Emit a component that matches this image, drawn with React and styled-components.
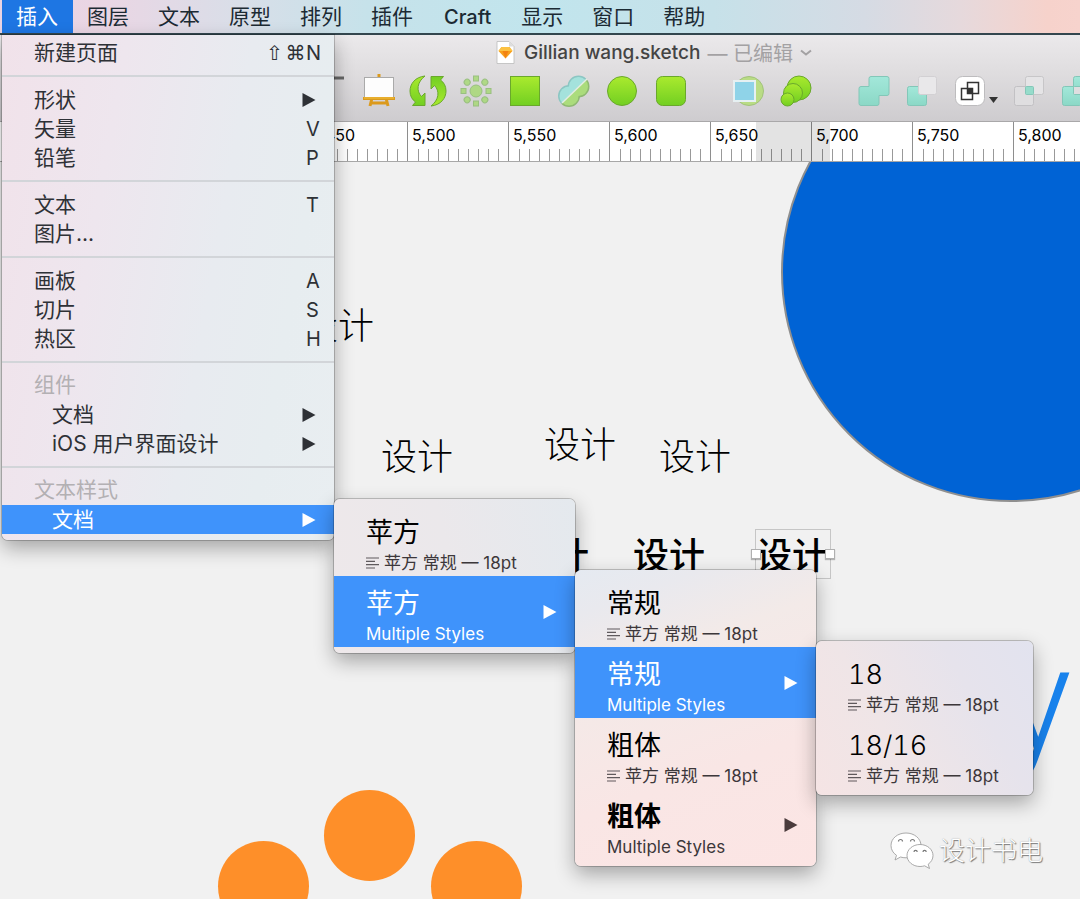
import React from "react";
import styled, { createGlobalStyle, css } from "styled-components";

const Global = createGlobalStyle`
  * { box-sizing: border-box; }
  html, body { margin: 0; padding: 0; }
  body, button { font-family: Inter, "Noto Sans CJK SC", sans-serif; }
  button { border: 0; padding: 0; background: none; color: inherit; text-align: left; }
  ul { list-style: none; margin: 0; padding: 0; }
`;

const Desktop = styled.div`
  position: relative;
  display: flex;
  flex-direction: column;
  min-height: 100vh;
  overflow: hidden;
  background: #f1f1f1;
`;

const MenuBar = styled.nav`
  display: flex;
  flex: none;
  height: 35px;
  padding-left: 2px;
  border-bottom: 2px solid #33464e;
  background: linear-gradient(90deg, #e9d3e2 0%, #ead6e4 10%, #d9dee8 22%, #c6e2ea 34%, #c1e5ed 50%, #c6e1e9 66%, #d5dbe4 80%, #e6d9dc 89%, #f6d2cb 97%, #f7d3cd 100%);
`;

const BarItem = styled.button`
  height: 33px;
  padding: 0 15px 0 14px;
  font-size: 21px;
  line-height: 32px;
  white-space: nowrap;
  color: ${(p) => (p.$open ? "#fff" : "#1c2a33")};
  background: ${(p) => (p.$open ? "#1e76e3" : "transparent")};
`;

const BarLatin = styled(BarItem)`
  padding: 0 16px;
  font-size: 20px;
  font-weight: 500;
`;

const WindowHead = styled.header`
  display: flex;
  flex-direction: column;
  flex: none;
  height: 87px;
  border-bottom: 1px solid #a9a8a9;
  background: linear-gradient(#ebe9eb, #e0dee0 40%, #cecccf);
`;

const TitleRow = styled.div`
  display: flex;
  align-items: center;
  height: 35px;
  padding-left: 496px;
  white-space: nowrap;
  color: #444;
`;

const DocTitle = styled.h1`
  margin: 0 7px 0 9px;
  font-size: 19px;
  font-weight: 500;
`;

const Edited = styled.button`
  display: flex;
  align-items: center;
  gap: 7px;
  font-size: 20px;
  color: #a3a1a3;
`;

const Toolbar = styled.div`
  display: flex;
  align-items: center;
  height: 42px;
  padding-left: 314px;
  overflow: hidden;
`;

const ToolGroup = styled.div`
  display: flex;
  flex: none;
  justify-content: space-between;
  width: ${(p) => p.$width}px;
  margin-left: ${(p) => p.$before}px;
`;

const ToolButton = styled.button`
  display: flex;
  align-items: center;
  flex: none;
  height: 34px;
  svg { display: block; }
`;

const Ruler = styled.div`
  position: relative;
  display: flex;
  flex: none;
  height: 40px;
  padding-left: 306px;
  overflow: hidden;
  border-bottom: 1px solid #a8a8a8;
  background: #fff;
`;

const RulerSpan = styled.div`
  position: absolute;
  left: 756px;
  top: 0;
  width: 74px;
  height: 40px;
  background: rgba(0, 0, 0, 0.11);
`;

const RulerCell = styled.div`
  display: flex;
  flex: none;
  flex-direction: column;
  justify-content: space-between;
  width: 101px;
  height: 40px;
  border-left: 1px solid #8e8e8e;
`;

const RulerLabel = styled.span`
  padding: 2px 0 0 4px;
  font-size: 16px;
  line-height: 22px;
  color: #000;
`;

const Ticks = styled.div`
  display: grid;
  grid-template-columns: repeat(10, 10px);
  height: 13px;
  span + span { border-left: 1px solid #999; }
`;

const Canvas = styled.main`
  position: relative;
  flex: 1;
  overflow: hidden;
`;

const Circle = styled.div`
  position: absolute;
  left: ${(p) => p.$x}px;
  top: ${(p) => p.$y}px;
  width: ${(p) => p.$size}px;
  height: ${(p) => p.$size}px;
  border-radius: 50%;
  background: ${(p) => p.$fill};
  ${(p) => p.$outlined && css`border: 2px solid #8f8f8f;`}
`;

const Word = styled.span`
  position: absolute;
  left: ${(p) => p.$x}px;
  top: ${(p) => p.$y}px;
  font-size: 36px;
  line-height: 50px;
  font-weight: ${(p) => (p.$bold ? 500 : 300)};
  white-space: nowrap;
  color: #000;
`;

const Selection = styled.div`
  position: absolute;
  left: 755px;
  top: 367px;
  display: flex;
  align-items: center;
  justify-content: space-between;
  width: 76px;
  height: 50px;
  border: 1px solid #c6c6c6;
`;

const Handle = styled.span`
  width: 10px;
  height: 10px;
  margin: 0 -5px;
  border: 1px solid #b0b0b0;
  background: #fff;
  box-shadow: 0 1px 1px rgba(0, 0, 0, 0.25);
`;

const BlueLetter = styled.span`
  position: absolute;
  left: 1003px;
  top: 453px;
  font-family: Roboto, sans-serif;
  font-size: 144px;
  line-height: 170px;
  font-weight: 300;
  color: #1882ec;
`;

const Watermark = styled.div`
  position: absolute;
  left: 890px;
  top: 669px;
  display: flex;
  align-items: center;
  gap: 5px;
  font-size: 26px;
  line-height: 40px;
  font-weight: 300;
  color: #fff;
  text-shadow: 1px 1px 1px #777, 0 0 1px #999;
`;

const surface = css`
  border-radius: 6px;
  box-shadow: 0 0 0 1px rgba(0, 0, 0, 0.2), 0 8px 20px rgba(0, 0, 0, 0.32);
`;

const MainMenu = styled.ul`
  ${surface}
  position: absolute;
  left: 2px;
  top: 35px;
  width: 332px;
  padding: 3px 0 6px !important;
  border-radius: 0 0 6px 6px;
  background: linear-gradient(100deg, #f1e2ea 0%, #eee6ee 30%, #e8ebf0 60%, #e7edf0 80%, #e9eef1 100%);
`;

const Row = styled.li`
  position: relative;
`;

const RowButton = styled.button`
  display: flex;
  align-items: center;
  justify-content: space-between;
  width: 100%;
  height: 29px;
  padding: 0 14px 0 ${(p) => (p.$indent ? 50 : 32)}px;
  font-size: 21px;
  line-height: 28px;
  white-space: nowrap;
  color: ${(p) => (p.$active ? "#fff" : "#2e3136")};
  background: ${(p) => (p.$active ? "#3f93fb" : "transparent")};
`;

const Heading = styled.li`
  height: 29px;
  padding-left: 32px;
  font-size: 21px;
  line-height: 28px;
  color: #b3b0b3;
`;

const Separator = styled.li`
  height: 2px;
  margin: 8px 0;
  background: #d2d5d9;
`;

const Shortcut = styled.span`
  display: flex;
  align-items: center;
  font-size: 20px;
`;

const Modifier = styled.span`
  width: 21px;
  text-align: center;
  font-family: "DejaVu Sans", sans-serif;
`;

const Key = styled.span`
  width: 14px;
`;

const ArrowSlot = styled.span`
  display: flex;
  margin-right: 4px;
`;

const SubMenu = styled.ul`
  ${surface}
  position: absolute;
  z-index: 1;
  left: 100%;
  top: -6px;
  width: ${(p) => p.$width}px;
  padding: 6px 0 !important;
  background: ${(p) => p.$tint};
`;

const StyleButton = styled.button`
  display: flex;
  align-items: center;
  justify-content: space-between;
  width: 100%;
  height: 71px;
  padding: 0 14px 0 32px;
  white-space: nowrap;
  color: ${(p) => (p.$active ? "#fff" : "#4a3b3c")};
  background: ${(p) => (p.$active ? "#3f93fb" : "transparent")};
`;

const StyleText = styled.span`
  display: flex;
  flex-direction: column;
  gap: 2px;
  padding-top: 6px;
`;

const StyleName = styled.span`
  font-size: 27px;
  line-height: 36px;
  font-weight: ${(p) => (p.$bold ? 700 : p.$light ? 300 : 400)};
  font-variant-numeric: tabular-nums;
  color: ${(p) => (p.$active ? "#fff" : "#000")};
`;

const StyleNote = styled.span`
  display: flex;
  align-items: center;
  gap: 4px;
  font-size: 17px;
  line-height: 20px;
  color: ${(p) => (p.$active ? "#fff" : "#3c373a")};
`;

const Triangle = () => (
  <svg width="14" height="14" viewBox="0 0 14 14" aria-hidden="true">
    <path d="M0.500 0V14L13.500 7Z" fill="currentColor" />
  </svg>
);

const Lines = () => (
  <svg width="14" height="14" viewBox="0 0 14 14" aria-hidden="true">
    <path d="M0 2h13M0 5.300h9M0 8.600h13M0 12h9" stroke="currentColor" strokeWidth="1.200" opacity="0.8" />
  </svg>
);

const GREEN = "url(#toolGreen)";
const EDGE = "#6aa82c";

const Defs = () => (
  <svg width="0" height="0" style={{ position: "absolute" }} aria-hidden="true">
    <defs>
      <linearGradient id="toolGreen" x1="0" y1="0" x2="0" y2="1">
        <stop offset="0" stopColor="#aaea2e" />
        <stop offset="1" stopColor="#72cf22" />
      </linearGradient>
      <linearGradient id="toolMint" x1="0" y1="0" x2="0" y2="1">
        <stop offset="0" stopColor="#a3e8da" />
        <stop offset="1" stopColor="#8bd8c6" />
      </linearGradient>
      <clipPath id="cutUpper"><path d="M-2-2H37L-2 36Z" /></clipPath>
      <clipPath id="cutLower"><path d="M37-2V36H-2Z" /></clipPath>
    </defs>
  </svg>
);

const Blobs = ({ fill, edge, clip }) => (
  <g clipPath={`url(#${clip})`}>
    <g stroke={edge} strokeWidth="2" fill={fill}>
      <circle cx="21.500" cy="12.500" r="10" />
      <circle cx="12" cy="22" r="10" />
    </g>
    <g fill={fill}>
      <circle cx="21.500" cy="12.500" r="9.500" />
      <circle cx="12" cy="22" r="9.500" />
    </g>
  </g>
);

const curvedArrow = "M14 2C4 3-1 10-1 17C-1 22 1 25.500 4.500 28L1.500 31.500H14V19L10.500 22.500C5 17 6 8 14 2Z";

const drawings = {
  minus: <path d="M20 4h10" stroke="#666" strokeWidth="3" />,
  artboard: (
    <>
      <path d="M17 0v5M10 24l-2 8M24 24l2 8M9 29h16" stroke="#dc9a1c" strokeWidth="3" fill="none" />
      <rect x="2.500" y="3.500" width="29" height="20" fill="#fdfdfd" stroke="#aaa" />
      <path d="M1 24.500h32" stroke="#d99a1e" strokeWidth="3" />
      <path d="M2 24h30" stroke="#f8c33c" />
    </>
  ),
  rotate: (
    <g fill={GREEN} stroke={EDGE}>
      <path d={curvedArrow} />
      <path d={curvedArrow} transform="rotate(180 17 17)" />
    </g>
  ),
  sun: (
    <g fill="#a8d977" stroke="#8fbc72" opacity="0.85">
      <circle cx="17" cy="17" r="6" />
      {[0, 90, 180, 270].map((a) => (
        <rect key={a} x="14.500" y="2" width="5" height="5" transform={`rotate(${a} 17 17)`} />
      ))}
      {[45, 135, 225, 315].map((a) => (
        <circle key={a} cx="17" cy="4.500" r="3" transform={`rotate(${a} 17 17)`} />
      ))}
    </g>
  ),
  square: <rect x="2.500" y="2.500" width="29" height="29" fill={GREEN} stroke={EDGE} />,
  scissors: (
    <>
      <Blobs fill="#a4e2dc" edge="#8cc6c3" clip="cutUpper" />
      <Blobs fill="#abdc7c" edge="#8fb972" clip="cutLower" />
      <path d="M5 29L30 5" stroke="#e4ece2" strokeWidth="1.500" />
    </>
  ),
  oval: <circle cx="17" cy="17" r="14.500" fill={GREEN} stroke={EDGE} />,
  rounded: <rect x="2.500" y="2.500" width="29" height="29" rx="6" fill={GREEN} stroke={EDGE} />,
  mask: (
    <>
      <circle cx="18" cy="17" r="14.500" fill="#b9dc85" stroke="#a2c27c" />
      <rect x="3" y="7" width="21" height="20" fill="#8fd3e8" stroke="#e6f0f2" strokeWidth="2" />
    </>
  ),
  stack: (
    <g fill={GREEN} stroke={EDGE}>
      <circle cx="20" cy="14" r="12" />
      <circle cx="14" cy="19" r="9.500" />
      <circle cx="8.500" cy="25.500" r="6.500" />
    </g>
  ),
  union: <path d="M14 2.500h16q2 0 2 2v15q0 2-2 2h-8v8q0 2-2 2H4q-2 0-2-2v-15q0-2 2-2h8v-8q0-2 2-2z" fill="url(#toolMint)" stroke="#83c7b8" />,
  subtract: (
    <>
      <rect x="2.500" y="12.500" width="19" height="19" rx="2" fill="url(#toolMint)" stroke="#83c7b8" />
      <rect x="13.500" y="2.500" width="18" height="18" rx="2" fill="#e9e8ea" stroke="#d2d0d3" />
    </>
  ),
  intersect: (
    <>
      <rect x="2.500" y="12.500" width="19" height="19" rx="2" fill="#dfdee0" stroke="#c2c1c4" />
      <rect x="13.500" y="2.500" width="18" height="18" rx="2" fill="#e5e4e6" stroke="#c7c6c8" />
      <rect x="13.500" y="12.500" width="8" height="8" rx="1" fill="#96dccb" stroke="#83c7b8" />
    </>
  ),
  difference: (
    <>
      <rect x="2.500" y="12.500" width="19" height="19" rx="2" fill="url(#toolMint)" stroke="#83c7b8" />
      <rect x="13.500" y="2.500" width="18" height="18" rx="2" fill="url(#toolMint)" stroke="#83c7b8" />
      <rect x="13.500" y="12.500" width="8" height="8" rx="1" fill="#dfdee0" stroke="#83c7b8" />
    </>
  ),
  boolean: (
    <>
      <rect x="2.500" y="2.500" width="29" height="29" rx="7" fill="#fff" stroke="#bdbcbe" />
      <rect x="8.500" y="14.500" width="11" height="11" fill="none" stroke="#333" strokeWidth="1.500" />
      <rect x="14.500" y="8.500" width="11" height="11" fill="none" stroke="#333" strokeWidth="1.500" />
      <rect x="14.500" y="14.500" width="5" height="5" fill="#333" />
    </>
  ),
};

const Tool = ({ kind, label, children }) => (
  <ToolButton aria-label={label}>
    <svg width="34" height="34" viewBox="0 0 34 34" overflow="visible" aria-hidden="true">
      {drawings[kind]}
    </svg>
    {children}
  </ToolButton>
);

const SketchFile = () => (
  <svg width="19" height="23" viewBox="0 0 19 23" aria-hidden="true">
    <path d="M1 0.500h12l5 5V22.500H1z" fill="#fff" stroke="#bbb" strokeWidth="0.800" />
    <path d="M13 0.500v5h5z" fill="#ddd" />
    <path d="M5.500 6h8L16.500 10 9.500 17.500 2.500 10Z" fill="#f8a01c" />
    <path d="M5.500 6h8L16.500 10H2.500Z" fill="#fcc243" />
    <path d="M6.500 10h6l-3 7.500z" fill="#f38211" />
  </svg>
);

const WeChat = () => (
  <svg width="44" height="40" viewBox="0 0 44 40" aria-hidden="true">
    <g fill="#fff" stroke="#a0a0a0" strokeWidth="0.900">
      <path d="M16 2C7.500 2 1 7.500 1 14.500c0 4 2 7.500 5.500 9.800L5 29l5.500-3c1.700.5 3.500.8 5.500.8 8.500 0 15-5.500 15-12.300S24.500 2 16 2Z" />
      <path d="M30 13.500c-7.300 0-13 5-13 11s5.700 11 13 11c1.600 0 3.200-.3 4.600-.7l4.900 2.700-1.300-4.300c3-2 4.800-5.200 4.800-8.700 0-6-5.700-11-13-11Z" />
    </g>
    <g fill="none" stroke="#777" strokeWidth="1.200">
      <path d="M8.500 10.500a2 2 0 0 1 4 0M20.500 10.500a2 2 0 0 1 4 0M24 21a1.600 1.600 0 0 1 3.200 0M33 21a1.600 1.600 0 0 1 3.200 0" />
    </g>
  </svg>
);

const tints = [
  "linear-gradient(75deg, #eee8ea, #ebe8eb 50%, #e4e9ee)",
  "linear-gradient(160deg, #e5eaf1 0%, #e9e9ee 12%, #f3eae8 30%, #f9e6e5 65%, #fce5e4 100%)",
  "linear-gradient(60deg, #f5e4e4 0%, #efe5e7 35%, #e6e3ec 70%, #e2e3ef 100%)",
];

const styleMenu = {
  width: 241,
  items: [
    { name: "苹方" },
    {
      name: "苹方",
      sub: {
        width: 241,
        items: [
          { name: "常规" },
          {
            name: "常规",
            sub: { width: 217, items: [{ name: "18", light: true }, { name: "18/16", light: true }] },
          },
          { name: "粗体" },
          { name: "粗体", bold: true, closed: true },
        ],
      },
    },
  ],
};

const StyleMenu = ({ menu, depth = 0 }) => (
  <SubMenu $width={menu.width} $tint={tints[depth]}>
    {menu.items.map((item, i) => {
      const active = Boolean(item.sub);
      const multiple = active || item.closed;
      return (
        <Row key={i}>
          <StyleButton $active={active}>
            <StyleText>
              <StyleName $bold={item.bold} $light={item.light} $active={active}>{item.name}</StyleName>
              <StyleNote $active={active}>
                {multiple ? "Multiple Styles" : <><Lines />苹方 常规 — 18pt</>}
              </StyleNote>
            </StyleText>
            {multiple && <ArrowSlot><Triangle /></ArrowSlot>}
          </StyleButton>
          {active && <StyleMenu menu={item.sub} depth={depth + 1} />}
        </Row>
      );
    })}
  </SubMenu>
);

const MenuRow = ({ label, letter, mods = [], arrow, indent, active, children }) => (
  <Row>
    <RowButton $indent={indent} $active={active}>
      {label}
      {letter && (
        <Shortcut>
          {mods.map((m) => <Modifier key={m}>{m}</Modifier>)}
          <Key>{letter}</Key>
        </Shortcut>
      )}
      {arrow && <ArrowSlot><Triangle /></ArrowSlot>}
    </RowButton>
    {children}
  </Row>
);

const rulerLabels = ["5,450", "5,500", "5,550", "5,600", "5,650", "5,700", "5,750", "5,800"];

export default function App() {
  return (
    <Desktop>
      <Global />
      <Defs />
      <MenuBar>
        <BarItem $open>插入</BarItem>
        <BarItem>图层</BarItem>
        <BarItem>文本</BarItem>
        <BarItem>原型</BarItem>
        <BarItem>排列</BarItem>
        <BarItem>插件</BarItem>
        <BarLatin>Craft</BarLatin>
        <BarItem>显示</BarItem>
        <BarItem>窗口</BarItem>
        <BarItem>帮助</BarItem>
      </MenuBar>
      <WindowHead>
        <TitleRow>
          <SketchFile />
          <DocTitle>Gillian wang.sketch</DocTitle>
          <Edited>
            — 已编辑
            <svg width="12" height="8" viewBox="0 0 12 8" aria-hidden="true">
              <path d="M1 1.500l5 4 5-4" fill="none" stroke="currentColor" strokeWidth="2" />
            </svg>
          </Edited>
        </TitleRow>
        <Toolbar>
          <ToolGroup $width={34} $before={0}>
            <Tool kind="minus" label="缩小" />
          </ToolGroup>
          <ToolGroup $width={326} $before={14}>
            <Tool kind="artboard" label="画板" />
            <Tool kind="rotate" label="旋转" />
            <Tool kind="sun" label="旋转复制" />
            <Tool kind="square" label="矩形" />
            <Tool kind="scissors" label="剪刀" />
            <Tool kind="oval" label="椭圆形" />
            <Tool kind="rounded" label="圆角矩形" />
          </ToolGroup>
          <ToolGroup $width={82} $before={43}>
            <Tool kind="mask" label="蒙版" />
            <Tool kind="stack" label="缩放" />
          </ToolGroup>
          <ToolGroup $width={237} $before={44}>
            <Tool kind="union" label="合并形状" />
            <Tool kind="subtract" label="减去顶层" />
            <Tool kind="boolean" label="布尔运算">
              <svg width="12" height="34" viewBox="0 0 12 34" aria-hidden="true">
                <path d="M2 23h9l-4.500 6z" fill="#333" />
              </svg>
            </Tool>
            <Tool kind="intersect" label="交集" />
            <Tool kind="difference" label="差集" />
          </ToolGroup>
        </Toolbar>
      </WindowHead>
      <Ruler>
        {rulerLabels.map((text) => (
          <RulerCell key={text}>
            <RulerLabel>{text}</RulerLabel>
            <Ticks>
              {Array.from({ length: 10 }, (_, i) => <span key={i} />)}
            </Ticks>
          </RulerCell>
        ))}
        <RulerSpan />
      </Ruler>
      <Canvas>
        <Circle $x={781} $y={-120} $size={460} $fill="#0063d5" $outlined />
        <Circle $x={218} $y={679} $size={91} $fill="#fe8f29" />
        <Circle $x={324} $y={628} $size={91} $fill="#fe8f29" />
        <Circle $x={431} $y={679} $size={91} $fill="#fe8f29" />
        <Word $x={302} $y={139}>设计</Word>
        <Word $x={381} $y={270}>设计</Word>
        <Word $x={544} $y={258}>设计</Word>
        <Word $x={659} $y={270}>设计</Word>
        <Word $x={517} $y={369} $bold>设计</Word>
        <Word $x={633} $y={369} $bold>设计</Word>
        <Word $x={756} $y={369} $bold>设计</Word>
        <Selection><Handle /><Handle /></Selection>
        <BlueLetter>y</BlueLetter>
        <Watermark><WeChat />设计书电</Watermark>
      </Canvas>
      <MainMenu>
        <MenuRow label="新建页面" mods={["⇧", "⌘"]} letter="N" />
        <Separator />
        <MenuRow label="形状" arrow />
        <MenuRow label="矢量" letter="V" />
        <MenuRow label="铅笔" letter="P" />
        <Separator />
        <MenuRow label="文本" letter="T" />
        <MenuRow label="图片..." />
        <Separator />
        <MenuRow label="画板" letter="A" />
        <MenuRow label="切片" letter="S" />
        <MenuRow label="热区" letter="H" />
        <Separator />
        <Heading>组件</Heading>
        <MenuRow label="文档" indent arrow />
        <MenuRow label="iOS 用户界面设计" indent arrow />
        <Separator />
        <Heading>文本样式</Heading>
        <MenuRow label="文档" indent arrow active>
          <StyleMenu menu={styleMenu} />
        </MenuRow>
      </MainMenu>
    </Desktop>
  );
}
